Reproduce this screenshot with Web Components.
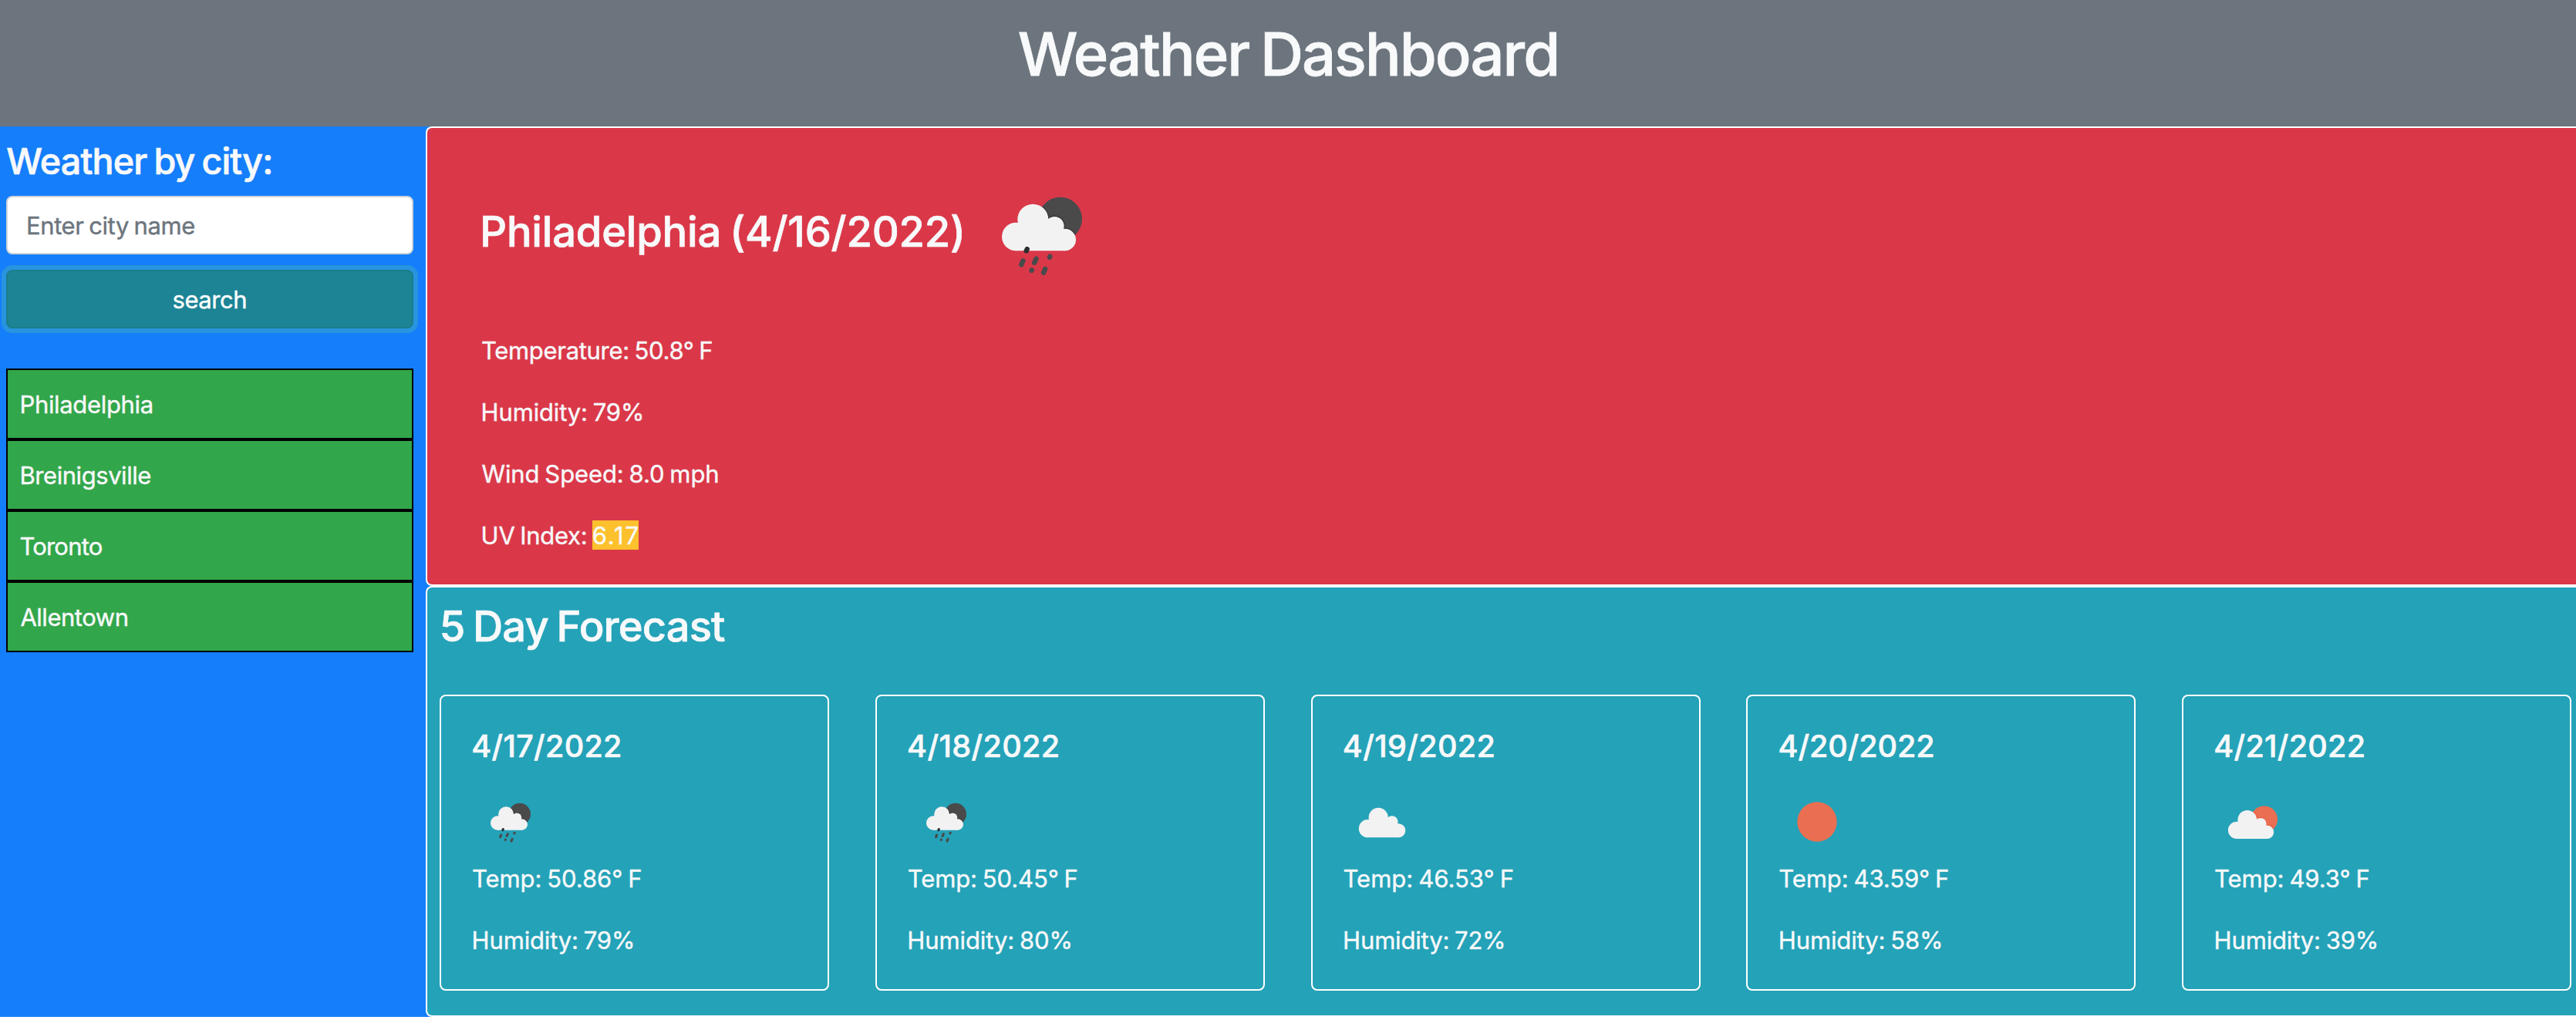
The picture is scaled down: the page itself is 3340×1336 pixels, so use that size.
<!DOCTYPE html>
<html lang="en">
<head>
<meta charset="utf-8">
<title>Weather Dashboard</title>
<style>
html, body { margin: 0; background: #fff; }
body { font: 400 31px/48px Inter, "Liberation Sans", sans-serif; color: #f8f9fa; overflow: hidden; -webkit-text-stroke: 0.4px currentColor; }
</style>
</head>
<body>
<weather-app></weather-app>
<script>
const measurer = document.createElement('canvas').getContext('2d');

/* Tracking, word gap and left bearing that give a string the requested ink box. */
function fitInk(style, text, width) {
  measurer.font = `${style.fontWeight} ${style.fontSize} ${style.fontFamily}`;
  const m = measurer.measureText(text);
  const word = -0.055 * parseFloat(style.fontSize);
  const ink = m.actualBoundingBoxRight + m.actualBoundingBoxLeft - 0.8 + word * (text.split(' ').length - 1);
  return { word, spacing: (width - ink) / (text.length - 1), bearing: -m.actualBoundingBoxLeft };
}

function define(name, render) {
  customElements.define(name, class extends HTMLElement {
    connectedCallback() {
      if (this.shadowRoot) return;
      this.attachShadow({ mode: 'open' }).innerHTML = render(this);
    }
  });
}

const cloud = `<g fill="#f2f2f2"><circle cx="88.3" cy="80.7" r="20"/><circle cx="66.3" cy="103" r="18.3"/>
  <circle cx="129.7" cy="107" r="14.3"/><circle cx="116.3" cy="89.2" r="12.3"/>
  <path d="M68 85L110 80L127.5 93L130 100V121.3H66.3V100Z"/></g>`;
const behind = (fill, shade) => `<circle cx="123.7" cy="80" r="28.3" fill="${fill}"/>
  <clipPath id="disc"><circle cx="123.7" cy="80" r="28.3"/></clipPath>
  <g clip-path="url(#disc)" fill="none" stroke="${shade}" stroke-width="3"><circle cx="88.3" cy="80.7" r="20"/><circle cx="116.3" cy="89.2" r="12.3"/><circle cx="129.7" cy="107" r="14.3"/></g>`;
const icons = {
  rain: behind('#4a4a4b', '#39393a') + cloud +
    `<g stroke="#4a4a4b" stroke-width="6.4" stroke-linecap="round">
    <path stroke="#2a2d2e" d="M80.7 119.2L79.7 121.4"/><path d="M75.4 134.2L73.2 139.4"/><path d="M92.5 131.6L90.2 136.8"/>
    <path d="M110.4 128.6L109.9 129.8"/><path d="M86.8 146.4L86.6 146.9"/><path d="M104.2 144.8L102.1 149.6"/></g>`,
  cloud: `<g transform="translate(-20.9 -13.4) scale(1.26 1.27)">${cloud}</g>`,
  sun: `<circle cx="100" cy="100" r="51.4" fill="#ea6e51"/>`,
  partly: `<g transform="translate(-23.5 -4) scale(1.235 1.22)">${behind('#ea6e51', '#e9573b')}${cloud}</g>`
};

define('weather-icon', el => `<style>
  :host { display: block; flex: none; width: 100px; height: 100px; }
  :host([large]) { width: 200px; height: 200px; }
  svg { display: block; width: 100%; height: 100%; }
  </style><svg viewBox="0 0 200 200">${icons[el.getAttribute('kind')]}</svg>`);

define('page-header', () => `<style>
  :host { display: block; box-sizing: border-box; height: 164px; padding: 22px 0 0 4px; background: #6c757d; text-align: center; }
  h1 { margin: 0; font: 500 77.6px/96px Inter, sans-serif; -webkit-text-stroke: 0.8px currentColor; }
  </style><h1><slot></slot></h1>`);

define('city-search', () => `<style>
  :host { display: flex; flex-direction: column; }
  h4 { margin: 0 0 16px; font: 500 46.6px/58px Inter, sans-serif; -webkit-text-stroke: 0.7px currentColor; }
  input, button { box-sizing: border-box; width: 100%; height: 76px; border: 2px solid #ced4da; border-radius: 8px; font: 400 31px/48px Inter, sans-serif; }
  input { padding: 12px 24px; background: #fff; color: #495057; margin: 0 0 20px; }
  input::placeholder { color: #6c757d; opacity: 1; }
  button { padding: 13px 24px 11px; margin: 0; background: #1d8495; border-color: #1b7d8c; color: #fff; box-shadow: 0 0 0 6px #2894df; }
  </style><h4><tracked-text left="1.3" width="341.2">Weather by city:</tracked-text></h4>
  <input placeholder="Enter city name" aria-label="City">
  <button><tracked-text left="1" width="92.9">search</tracked-text></button>`);

define('city-item', () => `<style>
  :host { display: block; box-sizing: border-box; height: 92px; padding: 21px 16px 19px; border: 2px solid #000; background: #32a64a; }
  </style><slot></slot>`);

define('side-bar', () => `<style>
  :host { display: flex; flex-direction: column; gap: 52px; box-sizing: border-box; width: 552px; flex: none; padding: 16px 16px 0 8px; background: #157efb; }
  nav { display: flex; flex-direction: column; }
  </style><city-search></city-search><nav><slot></slot></nav>`);

define('current-weather', () => `<style>
  :host { display: flex; flex-direction: column; box-sizing: border-box; height: 596px; padding: 38px 0 0 70px; border: 2px solid #fff; border-right: 0; border-radius: 8px 0 0 8px; background: #da3849; }
  header { display: flex; align-items: center; height: 200px; margin-bottom: 27px; }
  h3 { box-sizing: border-box; width: 627px; margin: 0; padding-bottom: 8px; font: 500 54.3px/68px Inter, sans-serif; white-space: nowrap; }
  ::slotted([slot=title]) { -webkit-text-stroke: 0.7px currentColor; }
  ::slotted(p) { margin: 0 0 32px; display: flex; }
  </style><header><h3><slot name="title"></slot></h3><weather-icon large kind="rain"></weather-icon></header><slot></slot>`);

define('uv-badge', () => `<style>
  :host { display: block; height: 38px; width: 60px; margin: 4px 0 0 6.5px; background: #fdc12d; line-height: 40px; }
  </style><slot></slot>`);

define('forecast-panel', () => `<style>
  :host { display: block; box-sizing: border-box; height: 559px; padding: 16px 6px 0 16px; border: 2px solid #fff; border-right: 0; border-radius: 8px 0 0 8px; background: #24a2b8; }
  h3 { margin: 0 0 55px; font: 500 54.3px/68px Inter, sans-serif; -webkit-text-stroke: 0.7px currentColor; }
  div { display: flex; justify-content: space-between; }
  </style><h3><tracked-text left="2.7" width="366.6">5 Day Forecast</tracked-text></h3><div><slot></slot></div>`);

define('day-card', el => {
  const a = n => el.getAttribute(n);
  return `<style>
  :host { display: block; box-sizing: border-box; width: 505px; height: 384px; padding: 40px; border: 2px solid #fff; border-radius: 8px; }
  h5 { margin: 0 0 23px; padding-top: 1px; font: 500 39.5px/49px Inter, sans-serif; -webkit-text-stroke: 0.6px currentColor; }
  p { margin: 0 0 32px; }
  </style><h5><tracked-text left="1.3" width="${a('dw')}">${a('date')}</tracked-text></h5>
  <weather-icon kind="${a('kind')}"></weather-icon>
  <p><tracked-text left="1" width="${a('tw')}">Temp: ${a('temp')}° F</tracked-text></p>
  <p><tracked-text left="1.6" width="${a('hw')}">Humidity: ${a('humidity')}%</tracked-text></p>`;
});

define('weather-app', () => `<style>
  :host { display: block; width: 3340px; height: 1336px; }
  .columns { display: flex; height: 1155px; }
  main { flex: 1; min-width: 0; background: linear-gradient(to right, #157efb 12px, #fff 12px); }
  </style>
  <page-header><tracked-text left="0" width="696.6">Weather Dashboard</tracked-text></page-header>
  <div class="columns">
    <side-bar>
      <city-item><tracked-text left="1.5" width="169.4">Philadelphia</tracked-text></city-item>
      <city-item><tracked-text left="1.5" width="167">Breinigsville</tracked-text></city-item>
      <city-item><tracked-text left="0.4" width="104.5">Toronto</tracked-text></city-item>
      <city-item><tracked-text left="0.4" width="137.5">Allentown</tracked-text></city-item>
    </side-bar>
    <main>
      <current-weather>
        <tracked-text slot="title" left="2.3" width="619.8">Philadelphia (4/16/2022)</tracked-text>
        <p><tracked-text left="1" width="297.5">Temperature: 50.8° F</tracked-text></p>
        <p><tracked-text left="1.6" width="205.5">Humidity: 79%</tracked-text></p>
        <p><tracked-text left="0.5" width="305">Wind Speed: 8.0 mph</tracked-text></p>
        <p><tracked-text left="1.6" width="133.3">UV Index:</tracked-text><uv-badge><tracked-text left="0.5" width="58">6.17</tracked-text></uv-badge></p>
      </current-weather>
      <forecast-panel>
        <day-card date="4/17/2022" kind="rain" temp="50.86" humidity="79" dw="190" tw="217.4" hw="205.5"></day-card>
        <day-card date="4/18/2022" kind="rain" temp="50.45" humidity="80" dw="193" tw="218" hw="208.3"></day-card>
        <day-card date="4/19/2022" kind="cloud" temp="46.53" humidity="72" dw="193" tw="218.4" hw="205.2"></day-card>
        <day-card date="4/20/2022" kind="sun" temp="43.59" humidity="58" dw="198" tw="218" hw="207.3"></day-card>
        <day-card date="4/21/2022" kind="partly" temp="49.3" humidity="39" dw="191.6" tw="198.6" hw="207.4"></day-card>
      </forecast-panel>
    </main>
  </div>`);

/* Single-line label with tuned tracking; registered after its containers so their fonts are in place. */
customElements.define('tracked-text', class extends HTMLElement {
  connectedCallback() {
    if (this.shadowRoot) return;
    const { word, spacing, bearing } = fitInk(getComputedStyle(this), this.textContent, +this.getAttribute('width'));
    this.attachShadow({ mode: 'open' }).innerHTML = `<style>
      :host { display: inline-block; vertical-align: top; white-space: nowrap; letter-spacing: ${spacing}px; word-spacing: ${word}px;
        margin-left: ${this.getAttribute('left') - bearing}px; margin-right: ${-spacing}px; }
      </style><slot></slot>`;
  }
});

const field = document.querySelector('weather-app').shadowRoot.querySelector('side-bar').shadowRoot
  .querySelector('city-search').shadowRoot.querySelector('input');
const fieldFit = fitInk(getComputedStyle(field), field.placeholder, 215.4);
field.style.letterSpacing = fieldFit.spacing + 'px';
field.style.wordSpacing = fieldFit.word + 'px';
</script>
</body>
</html>
